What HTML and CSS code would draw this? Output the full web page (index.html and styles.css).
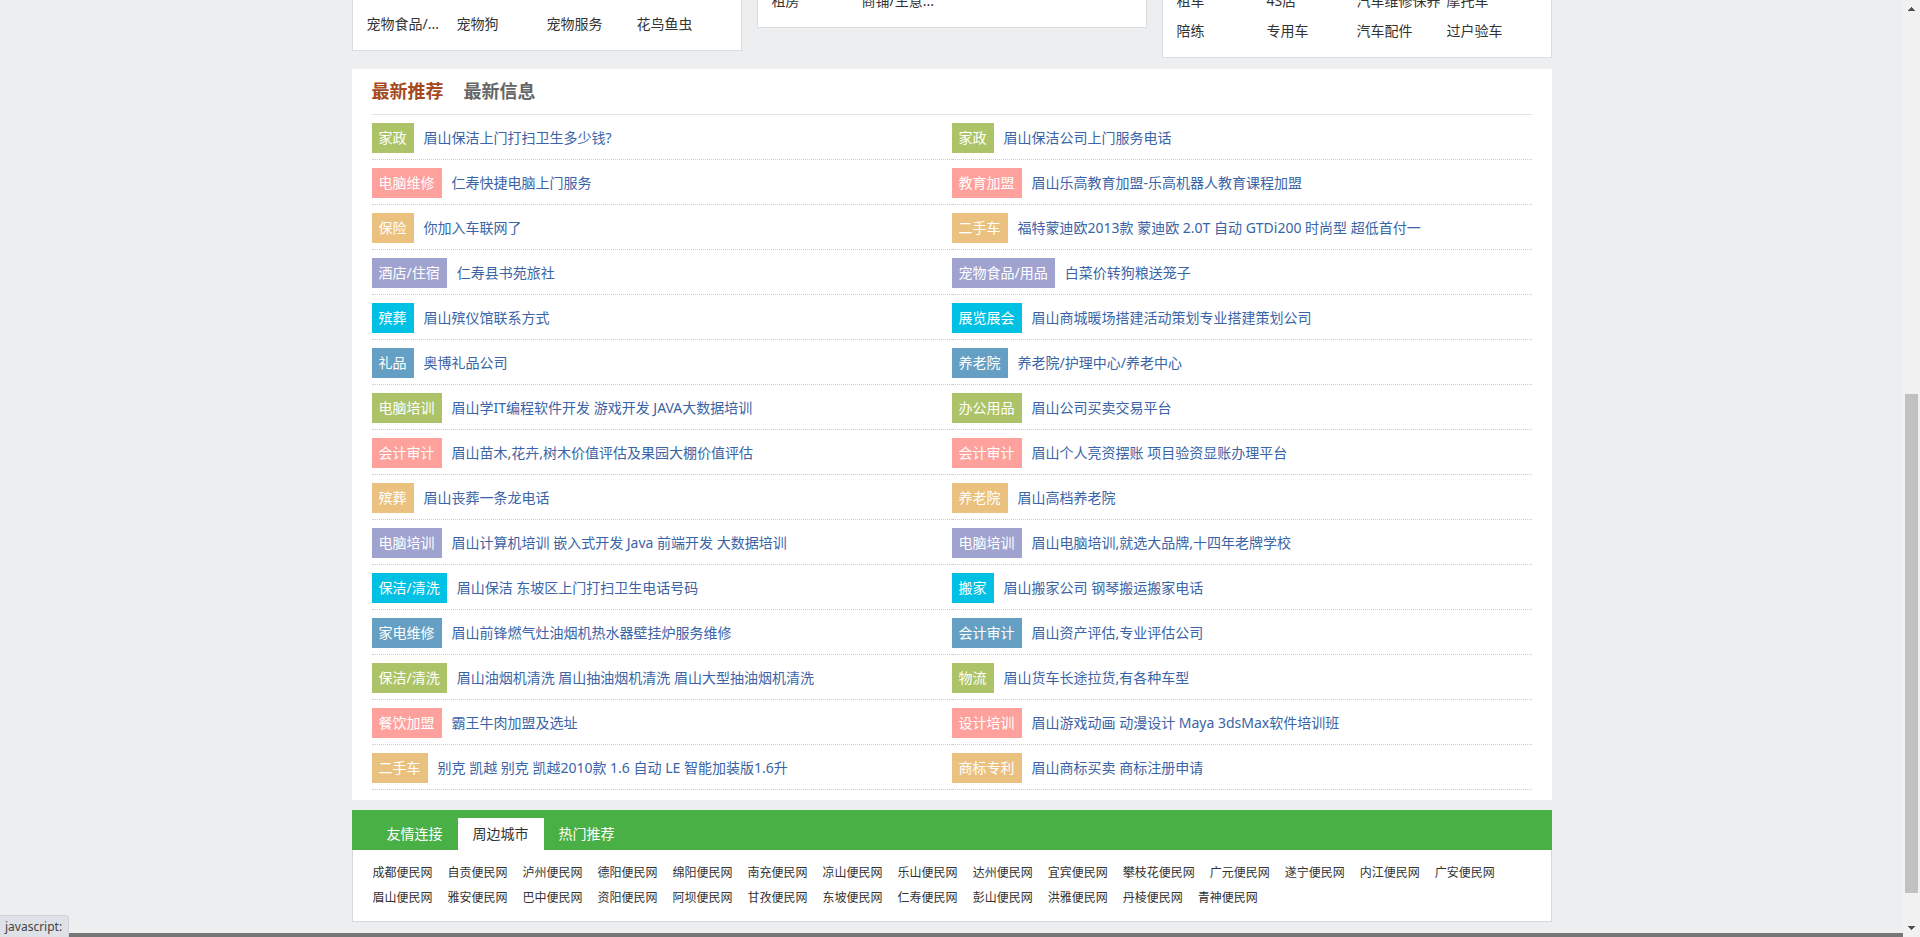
FILE: index.html
```
<!DOCTYPE html>
<html lang="zh-CN">
<head>
<meta charset="utf-8">
<title>眉山便民网</title>
<link rel="stylesheet" href="styles.css">
</head>
<body>
<div class="viewport">
  <div class="page">
    <div class="cards">
      <section class="card card-pets">
        <a href="#">宠物食品/...</a><a href="#">宠物狗</a><a href="#">宠物服务</a><a href="#">花鸟鱼虫</a>
      </section>
      <section class="card">
        <a href="#">租房</a><a href="#">商铺/生意...</a>
      </section>
      <section class="card">
        <a href="#">租车</a><a href="#">4S店</a><a href="#">汽车维修保养</a><a href="#">摩托车</a>
        <a href="#">陪练</a><a href="#">专用车</a><a href="#">汽车配件</a><a href="#">过户验车</a>
      </section>
    </div>

    <section class="latest">
      <div class="latest-tabs">
        <button class="latest-tab active" type="button">最新推荐</button>
        <button class="latest-tab" type="button">最新信息</button>
      </div>
      <ul class="posts">
        <li class="post green"><a class="tag" href="#">家政</a><a class="title" href="#">眉山保洁上门打扫卫生多少钱?</a></li>
        <li class="post green"><a class="tag" href="#">家政</a><a class="title" href="#">眉山保洁公司上门服务电话</a></li>
        <li class="post pink"><a class="tag" href="#">电脑维修</a><a class="title" href="#">仁寿快捷电脑上门服务</a></li>
        <li class="post pink"><a class="tag" href="#">教育加盟</a><a class="title" href="#">眉山乐高教育加盟-乐高机器人教育课程加盟</a></li>
        <li class="post sand"><a class="tag" href="#">保险</a><a class="title" href="#">你加入车联网了</a></li>
        <li class="post sand"><a class="tag" href="#">二手车</a><a class="title" href="#">福特蒙迪欧2013款 蒙迪欧 2.0T 自动 GTDi200 时尚型 超低首付一</a></li>
        <li class="post violet"><a class="tag" href="#">酒店/住宿</a><a class="title" href="#">仁寿县书苑旅社</a></li>
        <li class="post violet"><a class="tag" href="#">宠物食品/用品</a><a class="title" href="#">白菜价转狗粮送笼子</a></li>
        <li class="post cyan"><a class="tag" href="#">殡葬</a><a class="title" href="#">眉山殡仪馆联系方式</a></li>
        <li class="post cyan"><a class="tag" href="#">展览展会</a><a class="title" href="#">眉山商城暖场搭建活动策划专业搭建策划公司</a></li>
        <li class="post blue"><a class="tag" href="#">礼品</a><a class="title" href="#">奥博礼品公司</a></li>
        <li class="post blue"><a class="tag" href="#">养老院</a><a class="title" href="#">养老院/护理中心/养老中心</a></li>
        <li class="post green"><a class="tag" href="#">电脑培训</a><a class="title" href="#">眉山学IT编程软件开发 游戏开发 JAVA大数据培训</a></li>
        <li class="post green"><a class="tag" href="#">办公用品</a><a class="title" href="#">眉山公司买卖交易平台</a></li>
        <li class="post pink"><a class="tag" href="#">会计审计</a><a class="title" href="#">眉山苗木,花卉,树木价值评估及果园大棚价值评估</a></li>
        <li class="post pink"><a class="tag" href="#">会计审计</a><a class="title" href="#">眉山个人亮资摆账 项目验资显账办理平台</a></li>
        <li class="post sand"><a class="tag" href="#">殡葬</a><a class="title" href="#">眉山丧葬一条龙电话</a></li>
        <li class="post sand"><a class="tag" href="#">养老院</a><a class="title" href="#">眉山高档养老院</a></li>
        <li class="post violet"><a class="tag" href="#">电脑培训</a><a class="title" href="#">眉山计算机培训 嵌入式开发 Java 前端开发 大数据培训</a></li>
        <li class="post violet"><a class="tag" href="#">电脑培训</a><a class="title" href="#">眉山电脑培训,就选大品牌,十四年老牌学校</a></li>
        <li class="post cyan"><a class="tag" href="#">保洁/清洗</a><a class="title" href="#">眉山保洁 东坡区上门打扫卫生电话号码</a></li>
        <li class="post cyan"><a class="tag" href="#">搬家</a><a class="title" href="#">眉山搬家公司 钢琴搬运搬家电话</a></li>
        <li class="post blue"><a class="tag" href="#">家电维修</a><a class="title" href="#">眉山前锋燃气灶油烟机热水器壁挂炉服务维修</a></li>
        <li class="post blue"><a class="tag" href="#">会计审计</a><a class="title" href="#">眉山资产评估,专业评估公司</a></li>
        <li class="post green"><a class="tag" href="#">保洁/清洗</a><a class="title" href="#">眉山油烟机清洗 眉山抽油烟机清洗 眉山大型抽油烟机清洗</a></li>
        <li class="post green"><a class="tag" href="#">物流</a><a class="title" href="#">眉山货车长途拉货,有各种车型</a></li>
        <li class="post pink"><a class="tag" href="#">餐饮加盟</a><a class="title" href="#">霸王牛肉加盟及选址</a></li>
        <li class="post pink"><a class="tag" href="#">设计培训</a><a class="title" href="#">眉山游戏动画 动漫设计 Maya 3dsMax软件培训班</a></li>
        <li class="post sand"><a class="tag" href="#">二手车</a><a class="title" href="#">别克 凯越 别克 凯越2010款 1.6 自动 LE 智能加装版1.6升</a></li>
        <li class="post sand"><a class="tag" href="#">商标专利</a><a class="title" href="#">眉山商标买卖 商标注册申请</a></li>
      </ul>
    </section>

    <section class="links">
      <div class="links-tabs">
        <button class="links-tab" type="button">友情连接</button>
        <button class="links-tab active" type="button">周边城市</button>
        <button class="links-tab" type="button">热门推荐</button>
      </div>
      <div class="links-body">
        <a href="#">成都便民网</a><a href="#">自贡便民网</a><a href="#">泸州便民网</a><a href="#">德阳便民网</a><a href="#">绵阳便民网</a><a href="#">南充便民网</a><a href="#">凉山便民网</a><a href="#">乐山便民网</a><a href="#">达州便民网</a><a href="#">宜宾便民网</a><a href="#">攀枝花便民网</a><a href="#">广元便民网</a><a href="#">遂宁便民网</a><a href="#">内江便民网</a><a href="#">广安便民网</a><a href="#">眉山便民网</a><a href="#">雅安便民网</a><a href="#">巴中便民网</a><a href="#">资阳便民网</a><a href="#">阿坝便民网</a><a href="#">甘孜便民网</a><a href="#">东坡便民网</a><a href="#">仁寿便民网</a><a href="#">彭山便民网</a><a href="#">洪雅便民网</a><a href="#">丹棱便民网</a><a href="#">青神便民网</a>
      </div>
    </section>
  </div>
  <footer class="footer"></footer>
</div>

<div class="scrollbar" aria-hidden="true">
  <svg class="arrow" width="17" height="17" viewBox="0 0 17 17" shape-rendering="crispEdges"><path d="M8 7h1v1h1v1h1v1h1v1H5v-1h1V9h1V8h1z"/></svg>
  <div class="track"><div class="thumb"></div></div>
  <svg class="arrow" width="17" height="17" viewBox="0 0 17 17" shape-rendering="crispEdges"><path d="M5 6h7v1h-1v1h-1v1H9v1H8V9H7V8H6V7H5z"/></svg>
</div>

<div class="status">javascript:</div>
</body>
</html>
```
FILE: styles.css
```
* { box-sizing: border-box; }

body {
  margin: 0;
  display: flex;
  height: 100vh;
  overflow: hidden;
  background: #eceef0;
  color: #333;
  font: 14px/30px "Noto Sans", "Noto Sans CJK SC", sans-serif;
}

a { color: inherit; text-decoration: none; }

button {
  border: 0;
  padding: 0;
  background: none;
  color: inherit;
  font: inherit;
  cursor: pointer;
}

.viewport {
  flex: 1;
  min-width: 0;
  overflow: hidden;
}

.page {
  max-width: 1200px;
  margin: 0 auto;
}

/* Category cards, scrolled partly out of view */
.cards {
  display: grid;
  grid-template-columns: repeat(3, 1fr);
  align-items: start;
  gap: 15px;
  margin-top: -14px;
}

.card {
  display: grid;
  grid-template-columns: repeat(4, 90px);
  padding: 0 14px 11px;
  border: 1px solid #dcdddf;
  border-top: 0;
  background: #fff;
  white-space: nowrap;
}

.card-pets { padding-top: 23px; }

/* Latest posts */
.latest {
  margin-top: 11px;
  padding: 0 20px 10px;
  background: #fff;
}

.latest-tabs {
  display: flex;
  gap: 20px;
  border-bottom: 1px solid #e3e3e3;
}

.latest-tab {
  color: #666;
  font-size: 18px;
  font-weight: bold;
  line-height: 45px;
}

.latest-tab.active { color: #a5491e; }

.posts {
  display: grid;
  grid-template-columns: 1fr 1fr;
  margin: 0;
  padding: 0;
  list-style: none;
}

.post {
  display: flex;
  gap: 10px;
  padding: 8px 0 6px;
  border-bottom: 1px dotted #ccc;
  white-space: nowrap;
}

.tag {
  padding: 0 7px;
  color: #fff;
}

.title { color: #3a64a6; }

.green .tag { background: #acc467; }
.pink .tag { background: #fea19c; }
.sand .tag { background: #ebc17f; }
.violet .tag { background: #a0a3cf; }
.cyan .tag { background: #00c0e4; }
.blue .tag { background: #659fc3; }

/* Link groups */
.links { margin-top: 10px; }

.links-tabs {
  display: flex;
  padding: 8px 20px 0;
  background: #48b045;
}

.links-tab {
  padding: 0 15px;
  color: #fff;
  line-height: 32px;
}

.links-tab.active {
  background: #fff;
  color: #333;
}

.links-body {
  display: flex;
  flex-wrap: wrap;
  column-gap: 15px;
  padding: 10px 20px 11px;
  border: 1px solid #d6d7d9;
  border-top: 0;
  background: #fff;
  font-size: 12px;
  line-height: 25px;
}

.footer {
  height: 200px;
  margin-top: 11px;
  background: #777;
}

/* Scrollbar */
.scrollbar {
  display: flex;
  flex-direction: column;
  width: 17px;
  background: #f1f1f1;
}

.arrow {
  display: block;
  fill: #505050;
}

.track {
  display: flex;
  flex: 1;
  flex-direction: column;
  justify-content: flex-end;
  padding: 0 2px 27px;
}

.thumb {
  height: 57%;
  background: #c1c1c1;
}

/* Link target bubble over the page corner */
.status {
  position: absolute;
  left: 0;
  bottom: 0;
  padding: 0 6px 0 5px;
  border: 1px solid #cfd2d6;
  border-width: 1px 1px 0 0;
  border-radius: 0 4px 0 0;
  background: #dee1e6;
  color: #444;
  font-size: 12px;
  line-height: 21px;
}
```
